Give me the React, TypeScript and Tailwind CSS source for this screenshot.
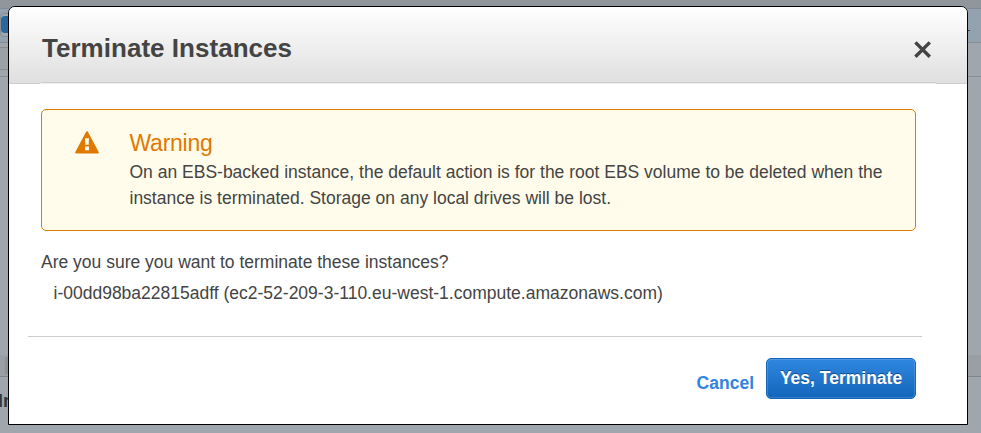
function Backdrop() {
  return (
    <div className="flex h-full flex-col overflow-hidden bg-[#9fa6ad]">
      <div className="h-[9px] shrink-0 border-b border-[#838c94] bg-[#8f979d]" />
      <div className="flex h-[34px] shrink-0 justify-between border-b border-[#868e94] bg-[#94a1af]">
        <div className="mt-[4px] h-[24px] w-5 rounded border border-[#858d93] bg-[#9fa6ad] pt-[2px]">
          <div className="h-[17px] w-5 rounded bg-[#2b669f]" />
        </div>
        <div className="mt-[21px] mr-[11px] h-px w-[2px] bg-[#3b3570]" />
      </div>
      <div className="h-[34px] shrink-0 border-b border-[#868e94] pt-[4px]">
        <div className="-ml-1 h-[23px] w-6 rounded border border-[#868e94] bg-[#9aa1a7]" />
      </div>
      <div className="h-[278px] shrink-0" />
      <div className="h-[22px] shrink-0 border-b border-[#7f878e] bg-[#999fa5]">
        <div className="mt-[2px] ml-[5px] h-[17px] w-5 bg-[#8b9298]" />
      </div>
      <div className="-ml-[2px] pt-[12px] text-[18px] leading-6 font-bold text-[#33383d]">In</div>
    </div>
  );
}

function WarningIcon() {
  return (
    <svg width="24" height="23" viewBox="0 0 24 23" className="shrink-0">
      <path d="M12 1.2 22.8 21.5H1.2Z" fill="#df7900" stroke="#df7900" strokeWidth="2" strokeLinejoin="round" />
      <path d="M10 7.3h4l-.3 6.5h-3.4ZM10 15.5h4v3.8h-4Z" fill="#fffceb" />
    </svg>
  );
}

function Dialog() {
  return (
    <div className="absolute top-[6px] left-[8px] flex h-[419px] w-[960px] flex-col overflow-hidden rounded-t-[7px] border border-black bg-white">
      <header className="h-[77px] shrink-0 bg-linear-to-b from-white to-[#dfdfdf]">
        <div className="flex h-[77px] flex-col">
          <div className="flex h-[75px] items-center justify-between pr-[35px] pl-[33px]">
            <h1 className="mt-[7px] text-[26px] leading-8 font-bold tracking-[0.03px] whitespace-nowrap text-[#444]">Terminate Instances</h1>
            <svg width="19" height="19" viewBox="0 0 19 19" className="mt-[9px]" aria-label="Close">
              <path d="M2.4 2.4 16.8 16.8M16.8 2.4 2.4 16.8" stroke="#444" strokeWidth="3.4" />
            </svg>
          </div>
          <div className="mr-[31px] ml-[32px] h-px bg-[#ccc]" />
          <div className="flex h-px justify-between bg-[#eee]">
            <div className="w-[31px] bg-[#ccc]" />
            <div className="w-[31px] bg-[#ccc]" />
          </div>
        </div>
      </header>
      <main className="px-[32px] pt-[25px] text-[17.5px] text-[#444]">
        <section className="flex h-[122px] w-[875px] rounded-[5px] border border-[#df7900] bg-[#fffceb] pt-[21px] pl-[33px]">
          <WarningIcon />
          <div className="ml-[30.5px] whitespace-nowrap">
            <h2 className="-mt-px text-[23px] leading-[27px] tracking-[-0.25px] text-[#df7900]">Warning</h2>
            <p className="mt-[2px] leading-[26px]">
              On an EBS-backed instance, the default action is for the root EBS volume to be deleted when the
              <br />
              instance is terminated. Storage on any local drives will be lost.
            </p>
          </div>
        </section>
        <p className="mt-[18px] leading-[26px]">Are you sure you want to terminate these instances?</p>
        <p className="mt-[5px] ml-[12.5px] leading-[26px]">i-00dd98ba22815adff (ec2-52-209-3-110.eu-west-1.compute.amazonaws.com)</p>
      </main>
      <footer className="mt-[30px] mr-[45px] ml-[19px] border-t border-[#ccc]">
        <div className="mt-[21px] mr-[6px] flex items-center justify-end text-[17.5px] font-bold">
          <button className="mt-[8px] mr-[12px] leading-[26px] text-[#2f85de]">Cancel</button>
          <button className="h-[41px] w-[150px] rounded-[5px] border border-[#1465b8] bg-linear-to-b from-[#3087df] to-[#1166bb] whitespace-nowrap text-white shadow-[inset_0_0_0_1px_#ffffff26] [text-shadow:0_-1px_0_#0f4f95]">
            Yes, Terminate
          </button>
        </div>
      </footer>
    </div>
  );
}

export default function App() {
  return (
    <div className="relative h-[433px] w-[981px] overflow-hidden font-['Liberation_Sans',Arial,sans-serif]">
      <Backdrop />
      <Dialog />
    </div>
  );
}
